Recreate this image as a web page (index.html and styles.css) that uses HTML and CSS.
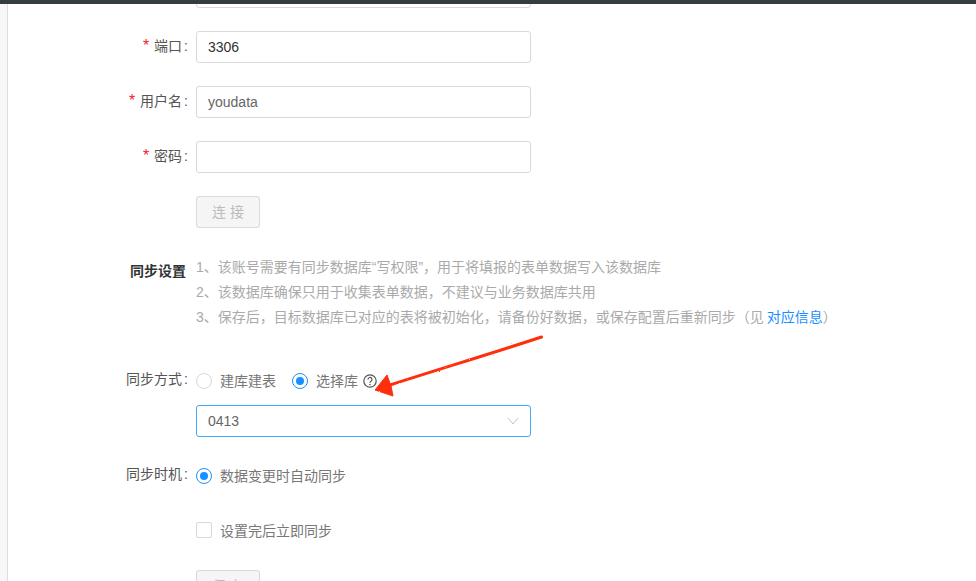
FILE: index.html
```html
<!DOCTYPE html>
<html lang="zh-CN">
<head>
<meta charset="utf-8">
<title>同步设置</title>
<link rel="stylesheet" href="styles.css">
</head>
<body>
<div class="topbar"></div>
<div class="page">
  <aside class="rail"></aside>
  <main class="content">
    <form class="form">
      <div class="row"><div class="label"></div><div class="input"></div></div>
      <div class="row"><div class="label"><span class="req">*</span>端口<span class="colon">:</span></div><div class="input dark">3306</div></div>
      <div class="row"><div class="label"><span class="req">*</span>用户名<span class="colon">:</span></div><div class="input">youdata</div></div>
      <div class="row"><div class="label"><span class="req">*</span>密码<span class="colon">:</span></div><div class="input"></div></div>
      <div class="row"><div class="label"></div><div class="btn">连 接</div></div>

      <section class="notes">
        <div class="notes-title">同步设置</div>
        <div class="notes-body">
          <p>1、该账号需要有同步数据库“写权限”，用于将填报的表单数据写入该数据库</p>
          <p>2、该数据库确保只用于收集表单数据，不建议与业务数据库共用</p>
          <p>3、保存后，目标数据库已对应的表将被初始化，请备份好数据，或保存配置后重新同步（见 <a class="link">对应信息</a>）</p>
        </div>
      </section>

      <div class="row method">
        <div class="label short">同步方式<span class="colon">:</span></div>
        <div class="opts">
          <span class="opt"><i class="radio"></i>建库建表</span>
          <span class="opt"><i class="radio on"></i>选择库
            <svg class="help" viewBox="0 0 14 14" width="14" height="14"><circle cx="7" cy="7" r="6.2" fill="none" stroke="#555" stroke-width="1.2"/><path d="M5 5.6a2 2 0 1 1 3 1.6c-.7.4-1 .8-1 1.5" fill="none" stroke="#555" stroke-width="1.2"/><circle cx="7" cy="10.5" r=".8" fill="#555"/></svg>
          </span>
        </div>
      </div>
      <div class="row select-row">
        <div class="label"></div>
        <div class="input select">0413
          <svg class="chev" viewBox="0 0 12 8" width="12" height="8"><path d="M1 1l5 6 5-6" fill="none" stroke="#c4c4c4" stroke-width="1"/></svg>
        </div>
      </div>
      <div class="row timing">
        <div class="label short">同步时机<span class="colon">:</span></div>
        <span class="opt"><i class="radio on"></i>数据变更时自动同步</span>
      </div>
      <div class="row check-row">
        <div class="label"></div>
        <span class="opt"><i class="check"></i>设置完后立即同步</span>
      </div>
      <div class="row"><div class="label"></div><div class="btn">保 存</div></div>
    </form>
    <svg class="arrow" viewBox="0 0 170 64" width="170" height="64">
      <defs>
        <filter id="rough" x="-5%" y="-10%" width="110%" height="120%">
          <feTurbulence type="fractalNoise" baseFrequency="0.5" numOctaves="2" seed="3"/>
          <feDisplacementMap in="SourceGraphic" scale="2"/>
        </filter>
      </defs>
      <g filter="url(#rough)">
        <path d="M168.5 2C120 18 70 33 17 50" fill="none" stroke="#ff2d0a" stroke-width="3" stroke-linecap="round"/>
        <path d="M14 40L2 55l18 6-2-10z" fill="#ff2d0a" stroke="#ff2d0a" stroke-linejoin="round"/>
      </g>
    </svg>
  </main>
</div>
</body>
</html>
```
FILE: styles.css
```css
* { box-sizing: border-box; }
html, body { margin: 0; height: 581px; overflow: hidden; background: #fff; }
body { font-family: "Liberation Sans", "Noto Sans CJK SC", sans-serif; font-size: 14px; color: #555; }
.topbar { position: relative; z-index: 2; height: 4px; background: #343d40; }
.page { display: flex; height: 577px; }
.rail { width: 8px; flex: none; background: #f6f7f9; border-right: 1px solid #ddd; }
.content { position: relative; flex: 1; }
.form { margin-top: -28px; }
.row { display: flex; margin-bottom: 23px; }
.label { width: 180px; flex: none; margin-right: 8px; height: 32px; line-height: 30px; text-align: right; color: #555; white-space: nowrap; }
.colon { margin-left: 2px; }
.req { color: #f5222d; margin-right: 5px; font-size: 16px; }
.input { width: 335px; height: 32px; border: 1px solid #d9d9d9; border-radius: 3px; padding: 0 11px; line-height: 30px; color: #666; background: #fff; }
.input.dark { color: #333; }
.btn { width: 64px; height: 32px; border: 1px solid #d9d9d9; border-radius: 3px; background: #f5f5f5; color: #bbb; text-align: center; line-height: 30px; }
.notes { display: flex; margin-top: 28px; }
.notes-title { width: 178px; padding-top: 5px; text-align: right; font-weight: bold; color: #333; line-height: 20px; margin-right: 10px; }
.notes-body p { margin: 0 0 3px; height: 22px; line-height: 22px; color: #aaa; white-space: nowrap; }
.link { color: #1890ff; margin-left: -1px; }
.method { margin-top: 37px; margin-bottom: 7px; height: 30px; }
.short { height: 24px; line-height: 22px; }
.opts { display: flex; gap: 16px; }
.opt { display: inline-flex; align-items: center; height: 24px; color: #777; white-space: nowrap; }
.radio { width: 16px; height: 16px; border: 1px solid #d9d9d9; border-radius: 50%; margin: 2px 8px 0 0; display: block; position: relative; }
.radio.on { border-color: #1890ff; }
.radio.on::after { content: ""; position: absolute; left: 3px; top: 3px; width: 8px; height: 8px; border-radius: 50%; background: #1890ff; }
.help { margin: 1px 0 0 5px; }
.select { border-color: #40a9ff; display: flex; align-items: center; justify-content: space-between; }
.select-row { margin-bottom: 26px; }
.timing { height: 24px; margin-bottom: 31px; }
.check-row { height: 24px; margin-bottom: 28px; }
.check { width: 16px; height: 16px; border: 1px solid #d9d9d9; border-radius: 2px; margin-right: 8px; display: block; }
.arrow { position: absolute; left: 365px; top: 331px; }
```
